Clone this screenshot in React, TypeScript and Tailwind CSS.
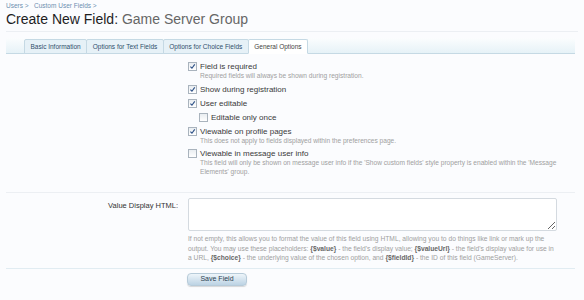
import type { ReactNode } from 'react'

const FONT = { fontFamily: '"Liberation Sans", Arial, sans-serif' }

const tabs = ['Basic Information', 'Options for Text Fields', 'Options for Choice Fields', 'General Options']

function Box({ checked }: { checked: boolean }) {
  return (
    <span className="relative inline-flex h-[9px] w-[9px] shrink-0 items-center justify-center border border-[#a9b3bd] bg-gradient-to-b from-[#e9edf1] to-white">
      {checked && (
        <svg viewBox="0 0 10 10" className="h-[7px] w-[7px]">
          <path d="M2 5.2 L4.2 7.5 L8.2 2" fill="none" stroke="#2b4f86" strokeWidth="1.6" />
        </svg>
      )}
    </span>
  )
}

function Check({ label, checked, children, indent }: { label: string; checked: boolean; children?: ReactNode; indent?: boolean }) {
  return (
    <div className={indent ? 'pl-[11px]' : ''}>
      <label className="flex items-center gap-[3px] text-[8px] leading-[11px] text-[#3a3a3a]">
        <Box checked={checked} />
        {label}
      </label>
      {children && <p className="pl-[12px] text-[6.6px] leading-[8.5px] text-[#a0a0a0]">{children}</p>}
    </div>
  )
}

export default function App() {
  return (
    <div className="min-h-[300px] w-[584px] bg-[#fbfcfe] px-[6px]" style={FONT}>
      <div className="pt-[2px] text-[6.5px] leading-[8px] text-[#6d8fb0]">
        Users &gt;&nbsp;&nbsp; Custom User Fields &gt;
      </div>
      <h1 className="border-b border-[#eceff3] pb-[3px] text-[14px] leading-[18px] text-[#1e1e1e]">
        Create New Field: <span className="text-[#666]">Game Server Group</span>
      </h1>

      {/* tabs */}
      <div className="mt-[6px] mr-[3px] flex h-[16px] items-end border-b border-[#c5d9e4] bg-gradient-to-b from-[#fbfdfe] to-[#e6f2f7] pl-[18px]">
        {tabs.map((t, i) => {
          const active = i === tabs.length - 1
          return (
            <div
              key={t}
              className={
                '-mb-px -ml-px flex h-[15px] items-center rounded-t-[2px] border border-[#c5d9e4] px-[5.5px] text-[6.5px] first:ml-0 ' +
                (active ? 'border-b-white bg-white text-[#444]' : 'bg-[#e6f1f7] text-[#2f4f6b]')
              }
            >
              {t}
            </div>
          )
        })}
      </div>

      <div className="flex pt-[7px]">
        <div className="w-[182px] shrink-0" />
        <div className="flex flex-col gap-[3px]">
          <Check label="Field is required" checked>
            Required fields will always be shown during registration.
          </Check>
          <Check label="Show during registration" checked />
          <Check label="User editable" checked />
          <Check label="Editable only once" checked={false} indent />
          <Check label="Viewable on profile pages" checked>
            This does not apply to fields displayed within the preferences page.
          </Check>
          <Check label="Viewable in message user info" checked={false}>
            This field will only be shown on message user info if the 'Show custom fields' style property is enabled within the 'Message
            <br />
            Elements' group.
          </Check>
        </div>
      </div>

      <div className="mt-[16px] mr-[3px] border-t border-[#eceff3]" />

      <div className="flex pt-[5px]">
        <div className="w-[182px] shrink-0 pr-[10px] pt-[3px] text-right text-[7.5px] leading-[10px] text-[#333]">
          Value Display HTML:
        </div>
        <div className="w-[370px]">
          <textarea className="block h-[33px] w-[369px] resize-y rounded-[2px] border border-[#d4dae0] bg-white" />
          <p className="mt-[3px] text-[6.7px] leading-[9.6px] text-[#a0a0a0]">
            If not empty, this allows you to format the value of this field using HTML, allowing you to do things like link or mark up the output. You
            may use these placeholders: <b className="text-[#666]">{'{$value}'}</b> - the field's display value; <b className="text-[#666]">{'{$valueUrl}'}</b> - the
            field's display value for use in a URL, <b className="text-[#666]">{'{$choice}'}</b> - the underlying value of the chosen option, and{' '}
            <b className="text-[#666]">{'{$fieldId}'}</b> - the ID of this field (GameServer).
          </p>
        </div>
      </div>

      <div className="mt-[5px] mr-[3px] border-t border-[#e1ecf2]" />

      <div className="flex pt-[4px]">
        <div className="w-[181px] shrink-0" />
        <button className="h-[13px] w-[60px] rounded-[4px] border border-[#b7cbd9] bg-gradient-to-b from-[#eef5fa] to-[#bcd3e4] text-[7px] text-[#2d3f52] shadow-[0_1px_1px_rgba(0,0,0,0.15)]">
          Save Field
        </button>
      </div>
    </div>
  )
}
